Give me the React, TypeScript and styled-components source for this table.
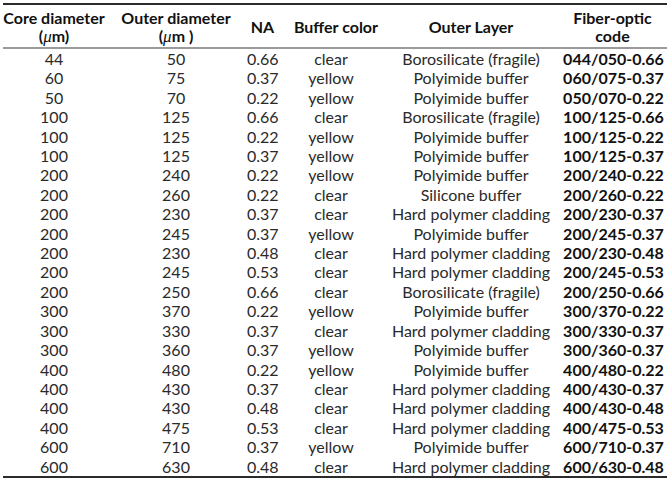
import React from 'react';
import styled, { createGlobalStyle } from 'styled-components';

const GlobalStyle = createGlobalStyle`
	html, body {
		margin: 0;
		padding: 0;
		background: #ffffff;
	}
	body {
		font-family: Lato, 'Open Sans', sans-serif;
	}
`;

type Fiber = {
	core: number;
	outer: number;
	na: string;
	buffer: string;
	layer: string;
};

const fibers: Fiber[] = [
	{ core: 44, outer: 50, na: '0.66', buffer: 'clear', layer: 'Borosilicate (fragile)' },
	{ core: 60, outer: 75, na: '0.37', buffer: 'yellow', layer: 'Polyimide buffer' },
	{ core: 50, outer: 70, na: '0.22', buffer: 'yellow', layer: 'Polyimide buffer' },
	{ core: 100, outer: 125, na: '0.66', buffer: 'clear', layer: 'Borosilicate (fragile)' },
	{ core: 100, outer: 125, na: '0.22', buffer: 'yellow', layer: 'Polyimide buffer' },
	{ core: 100, outer: 125, na: '0.37', buffer: 'yellow', layer: 'Polyimide buffer' },
	{ core: 200, outer: 240, na: '0.22', buffer: 'yellow', layer: 'Polyimide buffer' },
	{ core: 200, outer: 260, na: '0.22', buffer: 'clear', layer: 'Silicone buffer' },
	{ core: 200, outer: 230, na: '0.37', buffer: 'clear', layer: 'Hard polymer cladding' },
	{ core: 200, outer: 245, na: '0.37', buffer: 'yellow', layer: 'Polyimide buffer' },
	{ core: 200, outer: 230, na: '0.48', buffer: 'clear', layer: 'Hard polymer cladding' },
	{ core: 200, outer: 245, na: '0.53', buffer: 'clear', layer: 'Hard polymer cladding' },
	{ core: 200, outer: 250, na: '0.66', buffer: 'clear', layer: 'Borosilicate (fragile)' },
	{ core: 300, outer: 370, na: '0.22', buffer: 'yellow', layer: 'Polyimide buffer' },
	{ core: 300, outer: 330, na: '0.37', buffer: 'clear', layer: 'Hard polymer cladding' },
	{ core: 300, outer: 360, na: '0.37', buffer: 'yellow', layer: 'Polyimide buffer' },
	{ core: 400, outer: 480, na: '0.22', buffer: 'yellow', layer: 'Polyimide buffer' },
	{ core: 400, outer: 430, na: '0.37', buffer: 'clear', layer: 'Hard polymer cladding' },
	{ core: 400, outer: 430, na: '0.48', buffer: 'clear', layer: 'Hard polymer cladding' },
	{ core: 400, outer: 475, na: '0.53', buffer: 'clear', layer: 'Hard polymer cladding' },
	{ core: 600, outer: 710, na: '0.37', buffer: 'yellow', layer: 'Polyimide buffer' },
	{ core: 600, outer: 630, na: '0.48', buffer: 'clear', layer: 'Hard polymer cladding' },
];

const pad = (n: number) => String(n).padStart(3, '0');

const Table = styled.table`
	margin: 3px;
	width: 664px;
	border-collapse: collapse;
	table-layout: fixed;
	border-top: 2px solid #2b2b2b;
	border-bottom: 2px solid #2b2b2b;
	font-size: 16px;
	color: #2a2a2a;
`;

const Col = styled.col<{ $w: number }>`
	width: ${(p) => p.$w}px;
`;

const HeadRow = styled.tr`
	height: 44px;
	border-bottom: 2px solid #9a9a9a;
`;

const HeadCell = styled.th<{ $shift?: number }>`
	padding: 1px 0 0 ${(p) => p.$shift ?? 0}px;
	font-weight: 700;
	font-size: 16px;
	line-height: 18px;
	color: #111;
	text-align: center;
	vertical-align: middle;
	white-space: nowrap;
`;

const Mu = styled.i`
	font-family: 'Liberation Serif', serif;
	font-weight: 400;
	font-size: 17px;
	line-height: 1;
`;

const Row = styled.tr`
	height: 19.4px;
`;

const Cell = styled.td<{ $shift?: number; $trim?: number; $bold?: boolean }>`
	padding: 0 ${(p) => p.$trim ?? 0}px 0 ${(p) => p.$shift ?? 0}px;
	line-height: 19.4px;
	text-align: center;
	white-space: nowrap;
	font-weight: ${(p) => (p.$bold ? 700 : 400)};
	color: ${(p) => (p.$bold ? '#111' : '#2a2a2a')};
`;

export default function App() {
	return (
		<>
			<GlobalStyle />
			<Table>
				<colgroup>
					<Col $w={102} />
					<Col $w={142} />
					<Col $w={31} />
					<Col $w={112} />
					<Col $w={162} />
					<Col $w={115} />
				</colgroup>
				<thead>
					<HeadRow>
						<HeadCell>
							Core diameter
							<br />(<Mu>μ</Mu>m)
						</HeadCell>
						<HeadCell>
							Outer diameter
							<br />(<Mu>μ</Mu>m )
						</HeadCell>
						<HeadCell>NA</HeadCell>
						<HeadCell $shift={4}>Buffer color</HeadCell>
						<HeadCell>Outer Layer</HeadCell>
						<HeadCell $shift={6}>
							Fiber-optic
							<br />
							code
						</HeadCell>
					</HeadRow>
				</thead>
				<tbody>
					{fibers.map((f, i) => (
						<Row key={i}>
							<Cell>{f.core}</Cell>
							<Cell>{f.outer}</Cell>
							<Cell>{f.na}</Cell>
							<Cell $trim={6}>{f.buffer}</Cell>
							<Cell>{f.layer}</Cell>
							<Cell $shift={8} $bold>
								{pad(f.core)}/{pad(f.outer)}-{f.na}
							</Cell>
						</Row>
					))}
				</tbody>
			</Table>
		</>
	);
}
